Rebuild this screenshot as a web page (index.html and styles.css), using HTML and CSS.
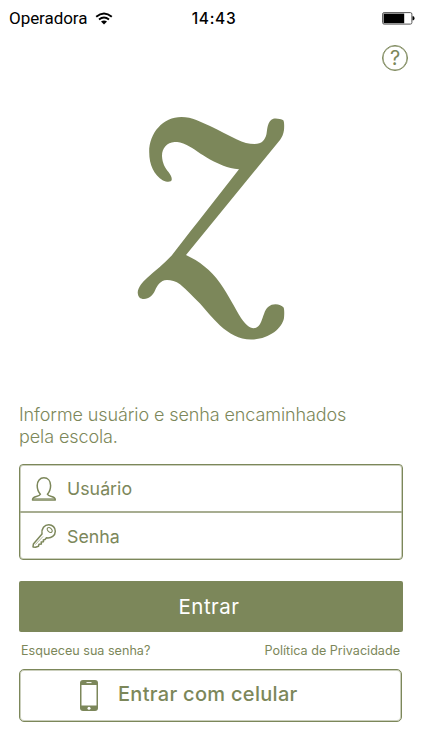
FILE: index.html
```html
<!DOCTYPE html>
<html lang="pt-BR">
<head>
  <meta charset="UTF-8">
  <meta name="viewport" content="width=device-width, initial-scale=1.0">
  <title>Entrar</title>
  <link rel="stylesheet" href="styles.css">
</head>
<body>
  <header class="status-bar">
    <div class="carrier">
      <span class="carrier-name">Operadora</span>
      <svg class="wifi" width="18" height="13" viewBox="0 0 18 13">
        <path d="M1.2 4.7Q9 -1.8 16.8 4.7M4 7.6Q9 3.6 14 7.6" fill="none" stroke="#000" stroke-width="1.9"/>
        <path d="M6 9.6Q9 7.3 12 9.6L9 12.6Z"/>
      </svg>
    </div>
    <span class="clock">14:43</span>
    <svg class="battery" width="33" height="13" viewBox="0 0 33 13">
      <rect x=".6" y=".6" width="29.3" height="11.5" rx="1.5" fill="#fff" stroke="#555" stroke-width="1"/>
      <rect x="1.6" y="1.6" width="20.6" height="9.6"/>
      <path d="M30.5 4.2h1q1 .5 1 2t-1 2h-1z"/>
    </svg>
  </header>

  <div class="top-bar">
    <button class="help" type="button">?</button>
  </div>

  <main class="login">
    <svg class="logo" width="150" height="226" viewBox="136 115 150 226">
      <path d="M273.3 118.8C276 118 281 119 283.3 120.2C284.3 122 284.3 126 284 130C283.5 134 282 137 280 140L186 255C199 261 211 270 220 283C229 296 235 308 241 318C247 327 253 330.500 258 326.500C261 324 262 319 264 314C266 307.500 270 304.200 275.500 304.200C279 304.200 282 305.500 283.600 307.500C284.500 310 284.300 314 284 318C282 329 268 339.500 251 339.500C239 339.500 229 333.500 220 325.500C212 318 206 310 200 303.500C193 297 187 290 180 284.300C176 281.500 171 280.100 167 280.100C160 280.500 157.500 285.500 155 290.500C153 295 149 299 144 299C140 299 138 297 137.700 292.500C138 287 143 281.500 147 278C155 270.500 164 264 171.700 255.500C180 245 188 234 197 223L239 169.200C227 168.500 219 164 210 159.500C201 154.500 194 148.500 186.700 145C182 142.500 178 142 174.500 142C167 142.500 162 148 162 156C162.300 163 165 168 168.500 172C170.500 174.500 172.500 178 171.500 180.500C170 182.300 166.500 181.900 163 180.400C154 175 149.200 165 149.200 152C149.200 133 163 117 181.500 117C192 117 201 122 210 126C220 131 228 135 237 139.500C243 142.500 249 144 254.500 144C262 144 265 140 266.500 134C267.500 128 267.500 121 273.300 118.800Z"/>
    </svg>

    <p class="message">Informe usuário e senha encaminhados pela escola.</p>

    <form class="form">
      <div class="fields">
        <label class="field">
          <svg class="field-icon" width="26" height="26" viewBox="0 0 26 26">
            <path d="M9.400 18.200C7.300 16 6.200 13 6.200 9.600C6.200 4.900 9 1.800 12.900 1.800S19.600 4.900 19.600 9.600C19.600 13 18.500 16 16.400 18.200Q17 19.600 20.500 20.400Q24.300 21.300 24.300 23.900H1.500Q1.500 21.300 5.300 20.400Q8.800 19.600 9.400 18.200Z"/>
            <path d="M2.300 22.600H23.500" stroke-width=".7"/>
          </svg>
          <input class="input" type="text" placeholder="Usuário">
        </label>
        <label class="field">
          <svg class="field-icon" width="26" height="26" viewBox="0 0 26 26">
            <path d="M11 11C10.200 5.500 13.500 1.700 17.800 1.700C21.600 1.700 24.300 4.700 24.300 8.200C24.300 12.500 20.500 15.500 15.500 14.800L14 16.600L12.300 16.900L12.500 18.700L10.200 19L10.400 21L8 21.200L7.500 23.300L4.500 24.300L2 23.900L2.400 21Z"/>
            <ellipse cx="18.700" cy="7" rx="2.900" ry="1.900" transform="rotate(45 18.700 7)" stroke-width="1"/>
            <path d="M4.200 21.700L12 13.500" stroke-width=".6"/>
          </svg>
          <input class="input" type="password" placeholder="Senha">
        </label>
      </div>
      <button class="btn btn-primary" type="button">Entrar</button>
      <div class="links">
        <a class="link">Esqueceu sua senha?</a>
        <a class="link">Política de Privacidade</a>
      </div>
      <button class="btn btn-outline" type="button">
        <svg class="phone" width="18" height="31" viewBox="0 0 18 31">
          <rect width="18" height="31" rx="3" fill="#7c875a"/>
          <rect x="1.500" y="5" width="15" height="20.500" fill="#fff"/>
          <path d="M6.500 2.600h5" stroke="#fff" stroke-width="1"/>
          <circle cx="9" cy="28.200" r="1.500" fill="#fff"/>
        </svg>
        <span>Entrar com celular</span>
      </button>
    </form>
  </main>
</body>
</html>
```
FILE: styles.css
```css
* {
  box-sizing: border-box;
}
body {
  margin: 0;
  min-height: 750px;
  background: #fff;
  color: #7c875a;
  font-family: Inter, "Liberation Sans", sans-serif;
}
.status-bar {
  display: grid;
  grid-template-columns: 1fr auto 1fr;
  align-items: center;
  height: 36px;
  padding: 0 7px 0 9px;
  color: #000;
}
.carrier {
  display: flex;
  align-items: center;
  gap: 8px;
}
.carrier-name {
  font-family: Roboto, sans-serif;
  font-size: 17px;
  letter-spacing: -0.05px;
}
.clock {
  padding-left: 4px;
  font-size: 15.5px;
  font-weight: 500;
  letter-spacing: 0.7px;
}
.battery {
  justify-self: end;
}
.top-bar {
  display: flex;
  justify-content: flex-end;
  padding: 9px 14px 0 0;
}
.help {
  width: 26px;
  height: 26px;
  padding: 0;
  border: 1px solid #7c875a;
  border-radius: 50%;
  box-shadow: inset 0 0 0 0.5px #7c875a;
  background: none;
  color: #7c875a;
  font-family: Inter, sans-serif;
  font-size: 20px;
  line-height: 24px;
}
.login {
  padding: 44px 19px 0 19px;
}
.logo {
  display: block;
  margin-left: 117px;
  fill: #7c875a;
}
.message {
  width: 345px;
  margin: 63px 0 16px;
  font-size: 18px;
  font-weight: 300;
  letter-spacing: -0.1px;
  line-height: 22px;
}
.fields {
  height: 96px;
  border: 1px solid #7c875a;
  border-radius: 4px;
  box-shadow: inset 0 0 0 1px rgba(124, 135, 90, 0.4);
}
.field {
  display: flex;
  align-items: center;
  gap: 10px;
  height: 47px;
  padding-left: 11px;
}
.field + .field {
  height: 48px;
  margin-top: -1px;
  border-top: 2px solid #a7ad91;
}
.field-icon {
  fill: none;
  stroke: #7c875a;
  stroke-width: 1.5;
  stroke-linejoin: round;
}
.input {
  flex: 1;
  min-width: 0;
  padding: 0;
  border: 0;
  outline: 0;
  background: none;
  font-family: inherit;
  font-size: 17.8px;
}
.input::placeholder {
  color: #7c875a;
}
.btn {
  display: flex;
  align-items: center;
  width: 100%;
  padding: 0;
  font-family: inherit;
}
.btn-primary {
  justify-content: center;
  height: 51px;
  margin-top: 21px;
  padding: 0 4px 1px 0;
  border: 0;
  border-radius: 2px;
  background: #7c875a;
  color: #fff;
  font-size: 20.5px;
  font-weight: 400;
  letter-spacing: 0.5px;
}
.links {
  display: flex;
  justify-content: space-between;
  padding: 11px 3px 10px 2px;
}
.link {
  font-size: 12.6px;
  line-height: 16px;
}
.btn-outline {
  gap: 20px;
  width: 383px;
  height: 53px;
  padding: 0 0 1px 60px;
  border: 1px solid #7c875a;
  border-radius: 5px;
  box-shadow: inset 0 0 0 1px rgba(124, 135, 90, 0.4);
  background: #fff;
  color: #7c875a;
  font-size: 20px;
  font-weight: 500;
  letter-spacing: 0.3px;
}
.btn-outline span {
  padding-bottom: 2px;
}
```
